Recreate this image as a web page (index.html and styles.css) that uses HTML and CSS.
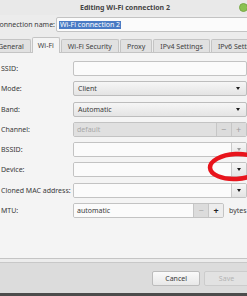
FILE: index.html
```html
<!DOCTYPE html>
<html>
<head>
<meta charset="utf-8">
<link rel="stylesheet" href="styles.css">
</head>
<body>
<div class="win">
  <div class="titlebar">
    <span class="title">Editing Wi-Fi connection 2</span>
    <span class="wbtn"></span>
  </div>
  <div class="main">
    <div class="namerow">
      <span class="namelabel">Connection name:</span>
      <div class="entry nameentry"><span class="sel">Wi-Fi connection 2</span></div>
    </div>
    <div class="tabs">
      <span class="tab">General</span>
      <span class="tab active">Wi-Fi</span>
      <span class="tab">Wi-Fi Security</span>
      <span class="tab">Proxy</span>
      <span class="tab">IPv4 Settings</span>
      <span class="tab">IPv6 Settings</span>
    </div>
    <div class="pane">
      <div class="form">
        <span class="lbl">SSID:</span>
        <div class="entry"></div>

        <span class="lbl">Mode:</span>
        <div class="combo"><span>Client</span><i class="arrow"></i></div>

        <span class="lbl">Band:</span>
        <div class="combo"><span>Automatic</span><i class="arrow"></i></div>

        <span class="lbl">Channel:</span>
        <div class="spin disabled">
          <div class="spinentry">default</div>
          <span class="sbtn">−</span><span class="sbtn">+</span>
        </div>

        <span class="lbl">BSSID:</span>
        <div class="centry"><div class="cfield"></div><span class="cbtn"><i class="arrow dim"></i></span></div>

        <span class="lbl">Device:</span>
        <div class="centry"><div class="cfield"></div><span class="cbtn"><i class="arrow"></i></span></div>

        <span class="lbl">Cloned MAC address:</span>
        <div class="centry"><div class="cfield"></div><span class="cbtn"><i class="arrow"></i></span></div>

        <span class="lbl">MTU:</span>
        <div class="mturow">
          <div class="spin mtu">
            <div class="spinentry">automatic</div>
            <span class="sbtn off">−</span><span class="sbtn on">+</span>
          </div>
          <span class="unit">bytes</span>
        </div>
      </div>
    </div>
  </div>
  <div class="actions">
    <span class="btn">Cancel</span>
    <span class="btn off">Save</span>
  </div>
  <svg class="mark" width="48" height="32" viewBox="0 0 48 32">
    <ellipse cx="29" cy="15.5" rx="26" ry="12.5" fill="none" stroke="#e8141c" stroke-width="4.5" transform="rotate(-3 29 15.5)"/>
  </svg>
</div>
</body>
</html>
```
FILE: styles.css
```css
html, body {
  margin: 0;
  padding: 0;
}
body {
  width: 247px;
  height: 296px;
  overflow: hidden;
  background: #4c4c4c;
  font-family: "Noto Sans", "DejaVu Sans", sans-serif;
  font-size: 7px;
  color: #3a3a3a;
}
.win {
  position: relative;
  margin-left: -8px;
  width: 258px;
  height: 293px;
  background: #ececec;
  display: flex;
  flex-direction: column;
}
.titlebar {
  height: 15px;
  position: relative;
  display: flex;
  align-items: center;
  justify-content: center;
  background: #e9e9e9;
}
.title {
  font-weight: bold;
  color: #454545;
  margin-left: 8px;
}
.wbtn {
  position: absolute;
  right: 2px;
  top: 3px;
  width: 9px;
  height: 9px;
  border-radius: 50%;
  background: #8cc152;
  border: 1px solid #79a847;
  box-sizing: border-box;
}
.main {
  padding: 2px 0 0 3px;
  flex: 1;
  display: flex;
  flex-direction: column;
}
.namerow {
  display: flex;
  align-items: center;
  height: 15px;
}
.namelabel {
  width: 61px;
}
.entry {
  height: 15px;
  box-sizing: border-box;
  background: #fbfbfb;
  border: 1px solid #c3c3c3;
  border-radius: 2px;
}
.nameentry {
  flex: 1;
  margin-right: -6px;
  display: flex;
  align-items: center;
  padding-left: 2px;
}
.sel {
  background: #4a7bc4;
  color: #fff;
  line-height: 8px;
  padding: 0 1px;
}
.tabs {
  display: flex;
  margin-top: 5px;
  margin-left: -4px;
  height: 15px;
  align-items: flex-end;
  position: relative;
  z-index: 1;
}
.tab {
  height: 13px;
  box-sizing: border-box;
  padding: 0 6px;
  margin-right: 1px;
  display: flex;
  align-items: center;
  background: #e1e1e1;
  border: 1px solid #c4c4c4;
  border-bottom: none;
  border-radius: 2px 2px 0 0;
  white-space: nowrap;
  color: #404040;
}
.tab.active {
  height: 16px;
  margin-bottom: -1px;
  background: #f4f4f4;
  padding: 0 5px;
}
.pane {
  margin-left: -4px;
  flex: 1;
  background: #f4f4f4;
  border: 1px solid #c4c4c4;
  padding: 8px 4px 0 9px;
  margin-bottom: 3px;
}
.form {
  display: grid;
  grid-template-columns: 72px 1fr;
  row-gap: 5.3px;
  align-items: center;
}
.lbl {
  white-space: nowrap;
}
.combo {
  height: 15px;
  box-sizing: border-box;
  border: 1px solid #bdbdbd;
  border-radius: 2px;
  background: linear-gradient(#f6f6f6, #e4e4e4);
  display: flex;
  align-items: center;
  justify-content: space-between;
  padding: 0 6px 0 4px;
}
.arrow {
  display: block;
  width: 0;
  height: 0;
  border-left: 2.5px solid transparent;
  border-right: 2.5px solid transparent;
  border-top: 3px solid #1e1e1e;
}
.arrow.dim {
  border-top-color: #9a9a9a;
}
.spin {
  height: 15px;
  display: flex;
  box-sizing: border-box;
  border: 1px solid #c3c3c3;
  border-radius: 2px;
  overflow: hidden;
}
.spinentry {
  flex: 1;
  display: flex;
  align-items: center;
  padding-left: 3px;
  background: #fbfbfb;
}
.spin.disabled .spinentry {
  background: #e0e0e0;
  color: #a8a8a8;
}
.sbtn {
  width: 14px;
  display: flex;
  align-items: center;
  justify-content: center;
  border-left: 1px solid #c6c6c6;
  background: #dcdcdc;
  color: #9c9c9c;
  font-size: 9px;
}
.sbtn.on {
  background: #ededed;
  color: #222;
  font-weight: bold;
}
.sbtn.off {
  background: #dcdcdc;
  color: #a8a8a8;
}
.centry {
  height: 15px;
  display: flex;
  box-sizing: border-box;
  border: 1px solid #c3c3c3;
  border-radius: 2px;
  overflow: hidden;
}
.cfield {
  flex: 1;
  background: #fbfbfb;
}
.cbtn {
  width: 14px;
  display: flex;
  align-items: center;
  justify-content: center;
  border-left: 1px solid #cacaca;
  background: linear-gradient(#f6f6f6, #e4e4e4);
}
.mturow {
  display: flex;
  align-items: center;
}
.mtu {
  width: 151px;
}
.unit {
  margin-left: 5px;
}
.actions {
  height: 31px;
  box-sizing: border-box;
  background: #dcdcdc;
  border-top: 1px solid #c8c8c8;
  display: flex;
  justify-content: flex-end;
  align-items: center;
  padding: 1px 1px 0 0;
  gap: 4px;
}
.btn {
  height: 15px;
  box-sizing: border-box;
  min-width: 45px;
  padding: 0 12px;
  display: flex;
  align-items: center;
  justify-content: center;
  border: 1px solid #bcbcbc;
  border-radius: 2px;
  background: linear-gradient(#fafafa, #e8e8e8);
  color: #3a3a3a;
}
.btn.off {
  background: #e2e2e2;
  color: #b4b4b4;
  border-color: #cccccc;
}
.mark {
  position: absolute;
  left: 215px;
  top: 151px;
}
```
